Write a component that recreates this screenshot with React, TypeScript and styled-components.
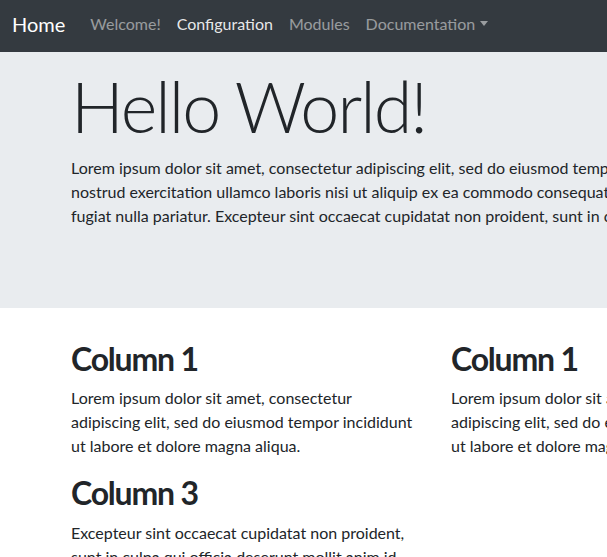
import React from 'react';
import styled, { createGlobalStyle } from 'styled-components';

const GlobalStyle = createGlobalStyle`
  body {
    margin: 0;
    font-family: Lato, "Open Sans", sans-serif;
    font-size: 16px;
    line-height: 1.5;
    color: #212529;
    background: #fff;
    overflow: hidden;
  }
  * { box-sizing: border-box; }
`;

const NAV_LINKS = [
  { label: 'Welcome!', active: false },
  { label: 'Configuration', active: true },
  { label: 'Modules', active: false },
];

const LOREM_LONG =
  'Lorem ipsum dolor sit amet, consectetur adipiscing elit, sed do eiusmod tempor incididunt ut labore et dolore magna aliqua. Ut enim ad minim veniam, quis nostrud exercitation ullamco laboris nisi ut aliquip ex ea commodo consequat. Duis aute irure dolor in reprehenderit in voluptate velit esse cillum dolore eu fugiat nulla pariatur. Excepteur sint occaecat cupidatat non proident, sunt in culpa qui officia deserunt mollit anim id est laborum.';

const COLUMNS = [
  {
    title: 'Column 1',
    text: 'Lorem ipsum dolor sit amet, consectetur adipiscing elit, sed do eiusmod tempor incididunt ut labore et dolore magna aliqua.',
  },
  {
    title: 'Column 1',
    text: 'Lorem ipsum dolor sit amet, consectetur adipiscing elit, sed do eiusmod tempor incididunt ut labore et dolore magna aliqua.',
  },
  {
    title: 'Column 2',
    text: 'Ut enim ad minim veniam, quis nostrud exercitation ullamco laboris nisi ut aliquip ex ea commodo consequat.',
  },
  {
    title: 'Column 3',
    text: 'Excepteur sint occaecat cupidatat non proident, sunt in culpa qui officia deserunt mollit anim id est laborum.',
  },
];

export default function App() {
  return (
    <>
      <GlobalStyle />
      <Navbar>
        <Brand>Home</Brand>
        <NavList>
          {NAV_LINKS.map((l) => (
            <NavLink key={l.label} $active={l.active}>
              {l.label}
            </NavLink>
          ))}
          <NavLink $active={false}>
            Documentation
            <Caret />
          </NavLink>
        </NavList>
      </Navbar>
      <Jumbotron>
        <Container>
          <Display>Hello World!</Display>
          <Lead>{LOREM_LONG}</Lead>
        </Container>
      </Jumbotron>
      <Container>
        <Row>
          {COLUMNS.map((c, i) => (
            <Col key={i}>
              <ColTitle>{c.title}</ColTitle>
              <ColText>{c.text}</ColText>
            </Col>
          ))}
        </Row>
      </Container>
    </>
  );
}

const Navbar = styled.nav`
  display: flex;
  align-items: center;
  height: 52px;
  padding: 0 12px 4px;
  background-color: #343a40;
`;

const Brand = styled.a`
  font-size: 20px;
  line-height: 30px;
  color: #fff;
  margin-right: 17px;
`;

const NavList = styled.div`
  display: flex;
  align-items: center;
`;

const NavLink = styled.a<{ $active: boolean }>`
  padding: 0 8px;
  line-height: 24px;
  white-space: nowrap;
  color: ${(p) => (p.$active ? 'rgba(255, 255, 255, 0.9)' : 'rgba(255, 255, 255, 0.5)')};
`;

const Caret = styled.span`
  display: inline-block;
  margin-left: 5px;
  vertical-align: 4px;
  border-top: 5px solid currentColor;
  border-left: 4px solid transparent;
  border-right: 4px solid transparent;
`;

const Jumbotron = styled.section`
  background-color: #e9ecef;
  padding: 12px 0 64px;
  margin-bottom: 32px;
`;

const Container = styled.div`
  width: 1110px;
  margin-left: 71px;
`;

const Display = styled.h1`
  margin: 0 0 8px;
  font-size: 70px;
  font-weight: 300;
  line-height: 1.2;
  letter-spacing: -2px;
`;

const Lead = styled.p`
  margin: 0 0 16px;
`;

const Row = styled.div`
  display: grid;
  grid-template-columns: repeat(3, 350px);
  column-gap: 30px;
`;

const Col = styled.div``;

const ColTitle = styled.h2`
  margin: 0 0 8px;
  font-size: 32px;
  font-weight: 700;
  line-height: 1.2;
  letter-spacing: -1.2px;
`;

const ColText = styled.p`
  margin: 0 0 16px;
`;
